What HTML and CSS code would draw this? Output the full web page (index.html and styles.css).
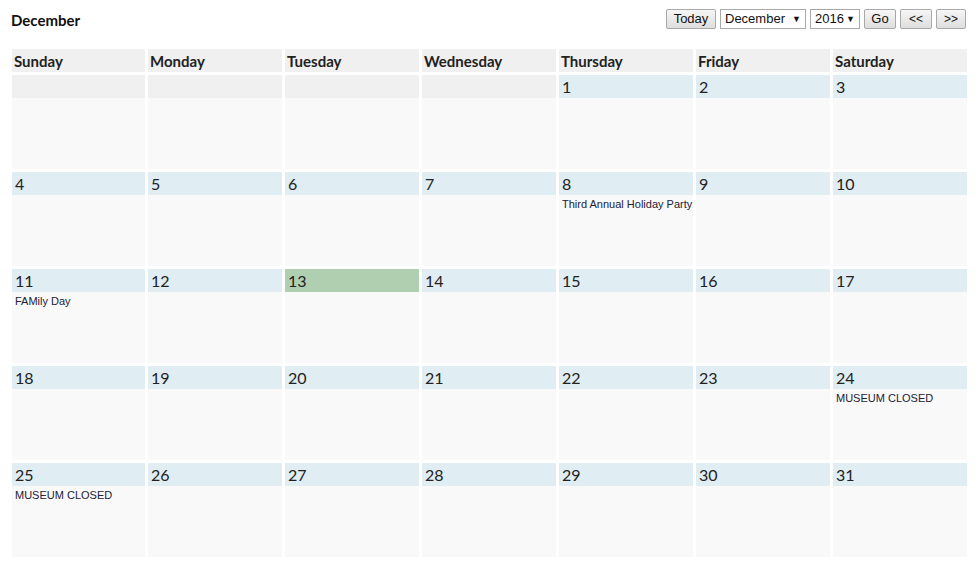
FILE: index.html
```html
<!DOCTYPE html>
<html>
<head>
<meta charset="utf-8">
<link rel="stylesheet" href="styles.css">
</head>
<body>
<div class="page">
  <div class="topbar">
    <div class="title">December</div>
    <div class="controls">
      <button class="btn btn-today">Today</button>
      <div class="sel sel-month">December <span class="arrow">▼</span></div>
      <div class="sel sel-year">2016 <span class="arrow">▼</span></div>
      <button class="btn btn-go">Go</button>
      <button class="btn btn-nav">&lt;&lt;</button>
      <button class="btn btn-nav btn-last">&gt;&gt;</button>
    </div>
  </div>
  <div class="cal">
    <div class="dh">Sunday</div>
    <div class="dh">Monday</div>
    <div class="dh">Tuesday</div>
    <div class="dh">Wednesday</div>
    <div class="dh">Thursday</div>
    <div class="dh">Friday</div>
    <div class="dh">Saturday</div>

    <div class="cell empty"><div class="num"></div></div>
    <div class="cell empty"><div class="num"></div></div>
    <div class="cell empty"><div class="num"></div></div>
    <div class="cell empty"><div class="num"></div></div>
    <div class="cell"><div class="num">1</div></div>
    <div class="cell"><div class="num">2</div></div>
    <div class="cell"><div class="num">3</div></div>

    <div class="cell"><div class="num">4</div></div>
    <div class="cell"><div class="num">5</div></div>
    <div class="cell"><div class="num">6</div></div>
    <div class="cell"><div class="num">7</div></div>
    <div class="cell"><div class="num">8</div><div class="ev">Third Annual Holiday Party</div></div>
    <div class="cell"><div class="num">9</div></div>
    <div class="cell"><div class="num">10</div></div>

    <div class="cell"><div class="num">11</div><div class="ev">FAMily Day</div></div>
    <div class="cell"><div class="num">12</div></div>
    <div class="cell today"><div class="num">13</div></div>
    <div class="cell"><div class="num">14</div></div>
    <div class="cell"><div class="num">15</div></div>
    <div class="cell"><div class="num">16</div></div>
    <div class="cell"><div class="num">17</div></div>

    <div class="cell"><div class="num">18</div></div>
    <div class="cell"><div class="num">19</div></div>
    <div class="cell"><div class="num">20</div></div>
    <div class="cell"><div class="num">21</div></div>
    <div class="cell"><div class="num">22</div></div>
    <div class="cell"><div class="num">23</div></div>
    <div class="cell"><div class="num">24</div><div class="ev">MUSEUM CLOSED</div></div>

    <div class="cell"><div class="num">25</div><div class="ev">MUSEUM CLOSED</div></div>
    <div class="cell"><div class="num">26</div></div>
    <div class="cell"><div class="num">27</div></div>
    <div class="cell"><div class="num">28</div></div>
    <div class="cell"><div class="num">29</div></div>
    <div class="cell"><div class="num">30</div></div>
    <div class="cell"><div class="num">31</div></div>
  </div>
</div>
</body>
</html>
```

FILE: styles.css
```css
html, body {
  margin: 0;
  padding: 0;
  background: #ffffff;
}
.page {
  padding: 9px 12px 0 12px;
  width: 955px;
  font-family: Lato, "Open Sans", sans-serif;
  color: #222;
}
.topbar {
  display: flex;
  justify-content: space-between;
  align-items: flex-start;
  height: 40px;
}
.title {
  margin-left: -1px;
  margin-top: 2px;
  font-size: 15px;
  font-weight: 700;
  color: #111;
}
.controls {
  display: flex;
  gap: 4px;
  margin-right: 1px;
  font-family: Arial, "Liberation Sans", sans-serif;
  font-size: 13px;
}
.btn {
  box-sizing: border-box;
  height: 20px;
  padding: 0 4px;
  font-family: Arial, "Liberation Sans", sans-serif;
  font-size: 13px;
  color: #111;
  border: 1px solid #a9a9a9;
  border-radius: 2px;
  background: linear-gradient(#f6f6f6, #dedede);
  line-height: 18px;
}
.btn-today { width: 50px; }
.btn-go { width: 32px; }
.btn-nav { width: 32px; font-size: 12px; }
.btn-last { width: 30px; }
.sel {
  box-sizing: border-box;
  height: 20px;
  border: 1px solid #a9a9a9;
  background: #fff;
  padding: 0 4px;
  line-height: 18px;
  color: #111;
  display: flex;
  justify-content: space-between;
}
.sel-month { width: 86px; }
.sel-year { width: 50px; }
.arrow { font-size: 9px; }
.cal {
  display: grid;
  grid-template-columns: 133px repeat(6, 134px);
  grid-template-rows: 23px repeat(5, 94px);
  gap: 3px;
}
.dh {
  background: #f0f0f0;
  font-size: 15px;
  font-weight: 700;
  padding: 3px 0 0 2px;
  color: #222;
}
.cell {
  background: #f9f9f9;
}
.num {
  height: 23px;
  background: #e0edf2;
  font-size: 16px;
  padding-left: 3px;
  line-height: 24px;
  color: #222;
}
.empty .num { background: #f0f0f0; }
.today .num { background: #b0cfb0; }
.ev {
  font-family: Arial, "Liberation Sans", sans-serif;
  font-size: 11px;
  color: #222238;
  padding: 3px 0 0 3px;
}
```
